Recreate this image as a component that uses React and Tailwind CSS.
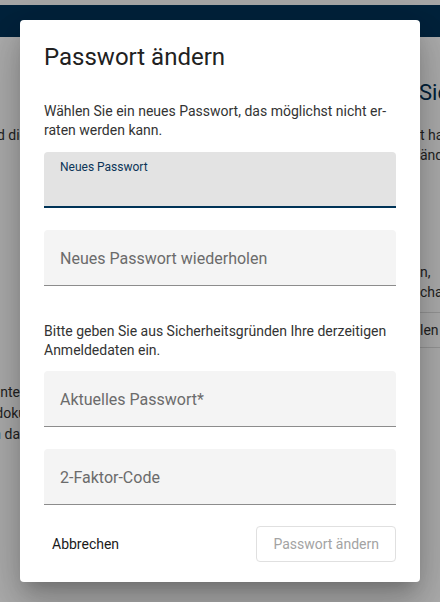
export default function App() {
  const font = { fontFamily: "Roboto, 'Noto Sans', sans-serif" };
  return (
    <div className="relative w-[440px] h-[602px] overflow-hidden bg-white" style={font}>
      {/* page behind */}
      <div className="h-[5px] bg-[#f7f7f7]" />
      <div className="h-[32px] bg-[#003357]" />
      <div className="flex justify-between">
        <div className="w-[20px] overflow-hidden flex flex-col items-end text-[14px] text-[#333]">
          <div className="mt-[88px] mr-[-7px] leading-[20px] whitespace-nowrap">Daten und die</div>
          <div className="mt-[237px] leading-[21px] whitespace-nowrap flex flex-col items-end">
            <span>Dokumente</span>
            <span className="mr-[-6px]">Vertragsdoku</span>
            <span>finden Sie in da</span>
          </div>
        </div>
        <div className="w-[40px] overflow-hidden flex flex-col text-[14px] text-[#333]">
          <div className="mt-[42px] ml-[19px] text-[22px] leading-[28px] text-[#003357] whitespace-nowrap">Sicherheit</div>
          <div className="mt-[18px] ml-[20px] leading-[20px] whitespace-nowrap">t hat</div>
          <div className="ml-[20px] leading-[20px] whitespace-nowrap">ändern</div>
          <div className="mt-[97px] ml-[20px] leading-[20px] whitespace-nowrap">n,</div>
          <div className="ml-[20px] leading-[20px] whitespace-nowrap">chang</div>
          <div className="mt-[10px] border-t border-[#ddd]" />
          <div className="h-[35px] flex items-center pl-[20px] border-b border-[#ddd] whitespace-nowrap">len</div>
        </div>
      </div>

      {/* backdrop */}
      <div className="absolute inset-0 bg-black/[0.32]" />

      {/* dialog */}
      <div className="absolute left-[20px] top-[20px] w-[400px] h-[562px] bg-white rounded-[4px] px-6 flex flex-col shadow-[0_11px_15px_-7px_rgba(0,0,0,0.2),0_24px_38px_3px_rgba(0,0,0,0.14),0_9px_46px_8px_rgba(0,0,0,0.12)]">
        <h2 className="pt-[21px] text-[24px] leading-[32px] font-normal text-[#212121]">Passwort ändern</h2>
        <p className="mt-[29px] text-[14px] leading-[19px] text-[#333]">
          Wählen Sie ein neues Passwort, das möglichst nicht er-
          <br />
          raten werden kann.
        </p>
        <div className="mt-[12px] h-[56px] rounded-t-[4px] bg-[#e3e3e3] border-b-2 border-[#003357] px-4 pt-[7px]">
          <div className="text-[12px] leading-[16px] text-[#0b3558]">Neues Passwort</div>
        </div>
        <div className="mt-[22px] h-[56px] rounded-t-[4px] bg-[#f4f4f4] border-b border-[#8c8c8c] px-4 pt-[17px]">
          <div className="text-[16px] leading-[24px] text-[#6b6b6b]">Neues Passwort wiederholen</div>
        </div>
        <p className="mt-[36px] text-[14px] leading-[19px] text-[#333]">
          Bitte geben Sie aus Sicherheitsgründen Ihre derzeitigen Anmeldedaten ein.
        </p>
        <div className="mt-[11px] h-[56px] rounded-t-[4px] bg-[#f4f4f4] border-b border-[#8c8c8c] px-4 pt-[17px]">
          <div className="text-[16px] leading-[24px] text-[#6b6b6b]">Aktuelles Passwort*</div>
        </div>
        <div className="mt-[22px] h-[56px] rounded-t-[4px] bg-[#f4f4f4] border-b border-[#8c8c8c] px-4 pt-[17px]">
          <div className="text-[16px] leading-[24px] text-[#6b6b6b]">2-Faktor-Code</div>
        </div>
        <div className="mt-[21px] flex justify-between items-center">
          <button className="h-9 px-2 text-[14px] text-[#1a1a1a] rounded-[4px]">Abbrechen</button>
          <button className="h-9 px-4 text-[14px] text-[#a3a3a3] border border-[#e0e0e0] rounded-[4px]" disabled>
            Passwort ändern
          </button>
        </div>
      </div>
    </div>
  );
}
